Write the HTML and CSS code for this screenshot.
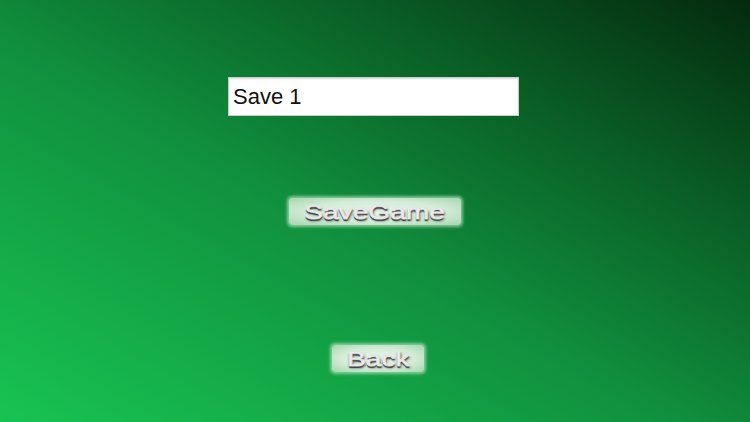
FILE: index.html
```html
<!DOCTYPE html>
<html>
<head>
<meta charset="utf-8">
<link rel="stylesheet" href="styles.css">
</head>
<body>
<main class="screen">
  <div class="field"><span class="field-text">Save 1</span></div>
  <button class="btn btn-save"><span class="btn-label">SaveGame</span></button>
  <button class="btn btn-back"><span class="btn-label">Back</span></button>
</main>
</body>
</html>
```

FILE: styles.css
```css
html, body {
  margin: 0;
  padding: 0;
  width: 750px;
  height: 422px;
  overflow: hidden;
}
.screen {
  width: 750px;
  height: 422px;
  box-sizing: border-box;
  background: linear-gradient(to top right, #18c352 0%, #10903e 45%, #0a6428 70%, #042a0e 100%);
  display: flex;
  flex-direction: column;
  align-items: center;
  padding-top: 77px;
  font-family: "Liberation Sans", Arial, Helvetica, sans-serif;
}
.field {
  width: 291px;
  height: 39px;
  box-sizing: border-box;
  margin-left: -3px;
  background: #fff;
  border: 1px solid #c8cfca;
  box-shadow: inset 0 1px 2px rgba(0,0,0,0.15);
  display: flex;
  align-items: center;
  padding-left: 4px;
  padding-top: 1px;
}
.field-text {
  font-size: 22px;
  color: #111;
}
.btn {
  border: none;
  padding: 0;
  margin: 0;
  display: flex;
  align-items: center;
  justify-content: center;
  font-family: "Liberation Sans", Arial, Helvetica, sans-serif;
  border-radius: 3px;
  background: radial-gradient(ellipse at center, #e8f4ea 0%, #d4ecd8 55%, #a4d6ae 100%);
  box-shadow: 0 0 3px 2px rgba(180, 225, 190, 0.7);
}
.btn-save {
  width: 172px;
  height: 27px;
  margin-top: 82px;
}
.btn-back {
  width: 92px;
  height: 27px;
  margin-top: 120px;
  margin-left: 6px;
}
.btn-label {
  display: inline-block;
  font-size: 21px;
  color: #ececec;
  -webkit-text-stroke: 0.6px #e4e4e4;
  transform: scaleX(1.34);
  text-shadow: 0 1px 0 #666, 0 2px 1px #333, 1px 2px 2px rgba(0,0,0,0.5);
  padding-top: 1px;
}
```
